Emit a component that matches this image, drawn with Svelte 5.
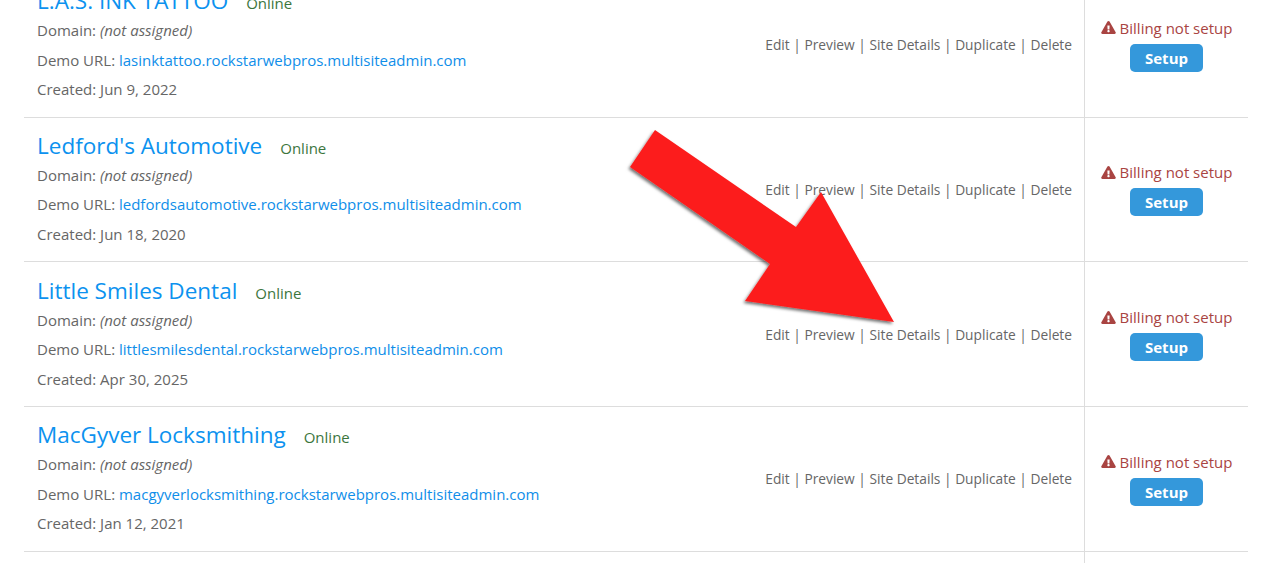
<script>
  const sites = [
    { name: "L.A.S. INK TATTOO", host: "lasinktattoo", created: "Jun 9, 2022" },
    { name: "Ledford's Automotive", host: "ledfordsautomotive", created: "Jun 18, 2020" },
    { name: "Little Smiles Dental", host: "littlesmilesdental", created: "Apr 30, 2025" },
    { name: "MacGyver Locksmithing", host: "macgyverlocksmithing", created: "Jan 12, 2021" },
  ];
  const actions = ["Edit", "Preview", "Site Details", "Duplicate", "Delete"];
</script>

<main class="page">
  <div class="sites">
    {#each sites as site}
      <div class="site-row">
        <div class="site-info">
          <div class="site-heading">
            <a href="#top" class="site-name">{site.name}</a>
            <span class="site-status">Online</span>
          </div>
          <div class="site-line">Domain: <em>(not assigned)</em></div>
          <div class="site-line">
            Demo URL: <a href="#top">{site.host}.rockstarwebpros.multisiteadmin.com</a>
          </div>
          <div class="site-line">Created: {site.created}</div>
        </div>
        <div class="site-actions">
          {#each actions as action, i}
            {#if i > 0}{" "}<span class="sep">|</span>{" "}{/if}<span>{action}</span>
          {/each}
        </div>
        <div class="site-billing">
          <div class="billing-msg">
            <svg class="warn" viewBox="0 0 576 512" aria-hidden="true">
              <path
                d="M569.5 440C588 472 564.8 512 527.9 512H48.1c-36.900 0-60-40.100-41.600-72L246.400 24c18.500-32 64.700-32 83.200 0l239.900 416zM288 354c-25.400 0-46 20.600-46 46s20.600 46 46 46 46-20.600 46-46-20.600-46-46-46zm-43.700-165.300l7.400 136c.3 6.400 5.600 11.300 12 11.300h48.500c6.400 0 11.700-5 12-11.300l7.400-136c.4-6.900-5.100-12.700-12-12.700h-63.400c-6.900 0-12.400 5.800-12 12.700z"
              />
            </svg>
            Billing not setup
          </div>
          <button type="button" class="setup-btn">Setup</button>
        </div>
      </div>
    {/each}
    <div class="site-row site-row-empty">
      <div></div>
      <div></div>
      <div class="site-billing"></div>
    </div>
  </div>

  <svg class="arrow" viewBox="0 0 1264 563" aria-hidden="true">
    <defs>
      <filter id="arrow-shadow" x="-10%" y="-10%" width="120%" height="120%">
        <feDropShadow dx="-1.500" dy="2" stdDeviation="1.500" flood-color="#000" flood-opacity="0.55" />
      </filter>
    </defs>
    <polygon
      points="655,130 630,167 770,264 745,301 894,322 821,192 796,227"
      fill="#fc1f1f"
      filter="url(#arrow-shadow)"
    />
  </svg>
</main>

<style>
  :global(body) {
    margin: 0;
    background: #fff;
    overflow: hidden;
  }
  .page {
    position: relative;
    height: 563px;
    overflow: hidden;
    font-family: "Open Sans", sans-serif;
    font-size: 15px;
    color: #666;
  }
  .sites {
    margin: -27.200px 16px 0 24px;
  }
  .site-row {
    display: grid;
    grid-template-columns: 1fr auto 164px;
    height: 144.700px;
    box-sizing: border-box;
    border-bottom: 1px solid #ddd;
    align-items: start;
  }
  .site-info {
    padding: 10.400px 0 0 13px;
  }
  .site-heading {
    display: flex;
    align-items: baseline;
    gap: 18px;
    height: 36px;
    line-height: 36px;
    margin-bottom: 1.200px;
  }
  a {
    color: #0f8ee9;
    text-decoration: none;
  }
  .site-name {
    font-size: 22.500px;
    color: #0c92ef;
  }
  .site-status {
    color: #3c763d;
  }
  .site-line {
    line-height: 20px;
    margin-bottom: 9.400px;
  }
  .site-line:last-child {
    margin-bottom: 0;
  }
  .site-actions {
    align-self: center;
    padding-right: 12px;
    white-space: nowrap;
    font-size: 13.750px;
  }
  .site-billing {
    align-self: stretch;
    border-left: 1px solid #ddd;
    margin-bottom: -1px;
    padding-bottom: 1px;
    display: flex;
    flex-direction: column;
    align-items: center;
    justify-content: center;
    gap: 6px;
  }
  .billing-msg {
    color: #a94442;
    line-height: 20px;
    display: flex;
    align-items: center;
    gap: 4px;
  }
  .warn {
    width: 15px;
    height: 13px;
    fill: #a94442;
  }
  .setup-btn {
    width: 73px;
    height: 28px;
    border: 0;
    border-radius: 5px;
    padding: 0;
    background: #3498db;
    color: #fff;
    font-family: inherit;
    font-size: 15px;
    font-weight: 700;
  }
  .arrow {
    position: absolute;
    inset: 0;
    width: 1264px;
    height: 563px;
    pointer-events: none;
  }
</style>
